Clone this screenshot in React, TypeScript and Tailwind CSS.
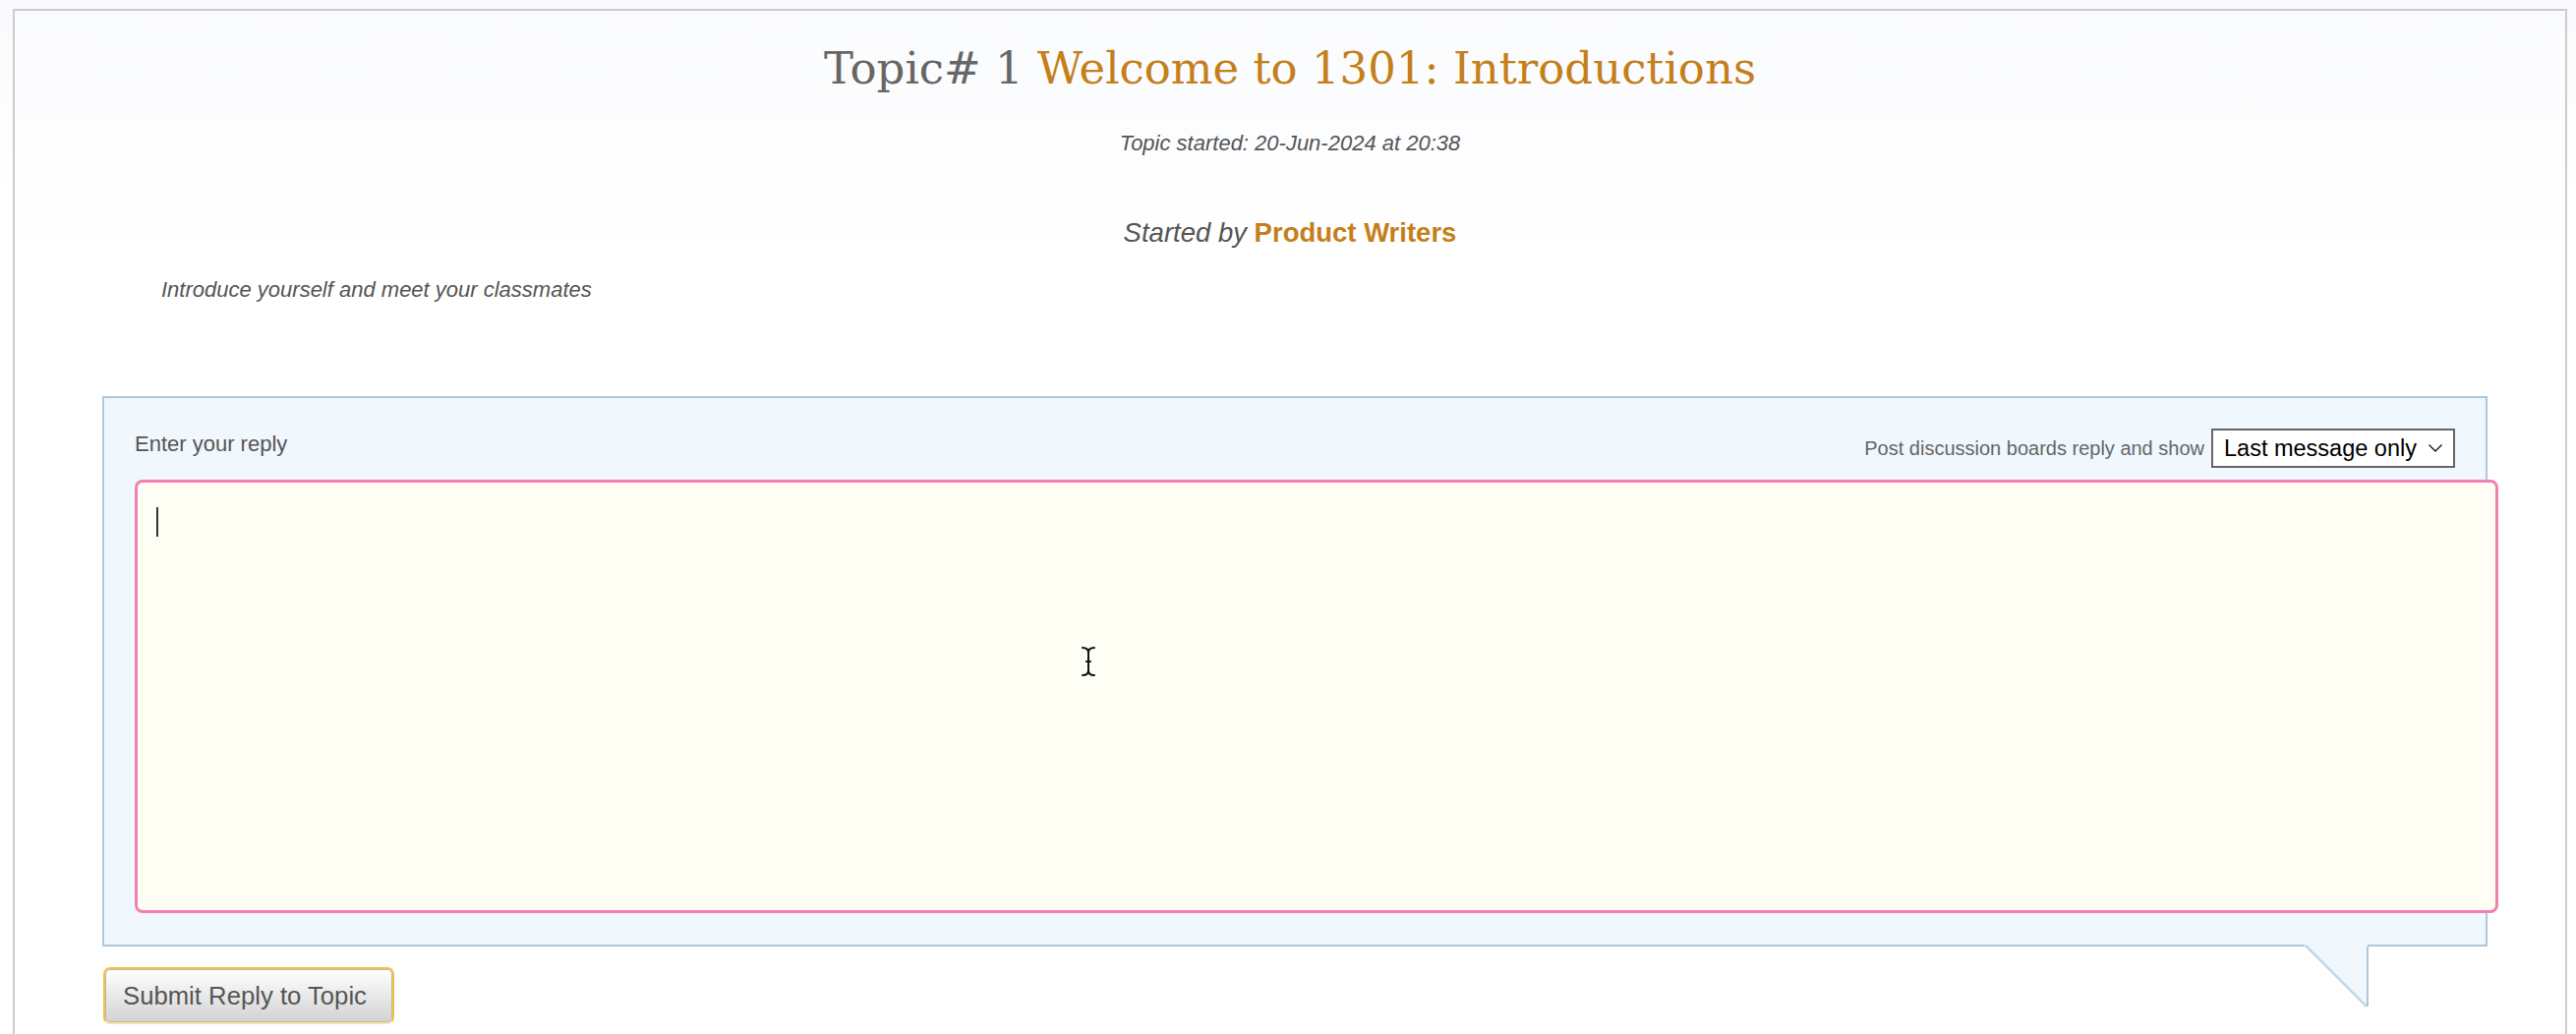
import React from "react";

const sans = "font-['Liberation_Sans',Arial,Helvetica,sans-serif]";

function IBeam() {
  return (
    <svg width="16" height="32" viewBox="0 0 16 32" className="absolute left-[959px] top-[166px]">
      <path d="M2 2 Q8 2 8 7 Q8 2 14 2 M8 7 L8 25 M8 25 Q8 30 2 30 M8 25 Q8 30 14 30 M6 16 L10 16" fill="none" stroke="#111" strokeWidth="2" strokeLinecap="round" />
    </svg>
  );
}

export default function App() {
  return (
    <div className={`min-h-[1052px] w-[2620px] overflow-hidden bg-gradient-to-b from-[#f9fafd] to-white to-[200px] pt-[9px] ${sans}`}>
      <div className="ml-[13px] w-[2598px] min-h-[1060px] border-2 border-[#cccccc] bg-gradient-to-b from-[#fafbfd] to-white to-[260px] pt-[34px]">
        <h1 className="text-center text-[45px] leading-[50px] font-['DejaVu_Serif',Georgia,serif] font-normal">
          <span className="text-[#666666]">Topic# 1 </span>
          <span className="text-[#c47f1a]">Welcome to 1301: Introductions</span>
        </h1>
        <p className="mt-[38px] text-center text-[22px] leading-[26px] italic text-[#555555]">
          Topic started: 20-Jun-2024 at 20:38
        </p>
        <p className="mt-[62px] text-center text-[27.5px] leading-[31px] text-[#555555]">
          <span className="italic">Started by </span>
          <span className="font-bold text-[#c47f1a]">Product Writers</span>
        </p>
        <p className="mt-[30px] ml-[149px] text-[22px] leading-[26px] italic text-[#555555]">
          Introduce yourself and meet your classmates
        </p>

        <div className="relative mt-[95px] ml-[89px] w-[2426px] border-2 border-[#adc8da] bg-[#f0f7fd] pl-[31px] pr-[31px] pt-[31px] pb-[32px]">
          <div className="flex items-start justify-between">
            <span className="mt-[3px] text-[22px] leading-[26px] text-[#555555]">Enter your reply</span>
            <div className="flex items-center gap-[7px]">
              <span className="text-[20px] leading-[24px] text-[#666666]">Post discussion boards reply and show</span>
              <div className="flex h-[40px] w-[248px] items-center justify-between border-2 border-[#666666] bg-white pl-[11px] pr-[10px]">
                <span className="text-[23.5px] leading-[28px] text-black">Last message only</span>
                <svg width="16" height="10" viewBox="0 0 16 10">
                  <path d="M1.5 1.5 L8 8 L14.5 1.5" fill="none" stroke="#111" strokeWidth="1.3" />
                </svg>
              </div>
            </div>
          </div>
          <div className="relative mt-[12px] h-[441px] w-[2404px] rounded-[8px] border-[3.5px] border-[#f47fb0] bg-[#fefef5] pl-[19px] pt-[25px]">
            <div className="h-[30px] w-[2px] bg-[#333333]" />
            <IBeam />
          </div>
          <svg width="68" height="66" viewBox="0 0 68 66" className="absolute top-full left-[2236px]">
            <polygon points="1,0 66,0 66,63" fill="#f0f7fd" />
            <line x1="3" y1="1" x2="65" y2="63" stroke="#c3d7e6" strokeWidth="2.5" />
            <line x1="66" y1="2" x2="66" y2="63" stroke="#adc8da" strokeWidth="2" />
          </svg>
        </div>

        <div className="mt-[21px] ml-[90px] inline-block rounded-[7px] border-2 border-[#f3c13f] border-b-[#fbe0a0]">
          <button className="flex h-[54px] w-[292px] items-center justify-start rounded-[5px] border border-[#b8b8b8] bg-gradient-to-b from-white to-[#d3d3d3] pl-[17px] text-[25.7px] text-[#555555]">
            Submit Reply to Topic
          </button>
        </div>
      </div>
    </div>
  );
}
